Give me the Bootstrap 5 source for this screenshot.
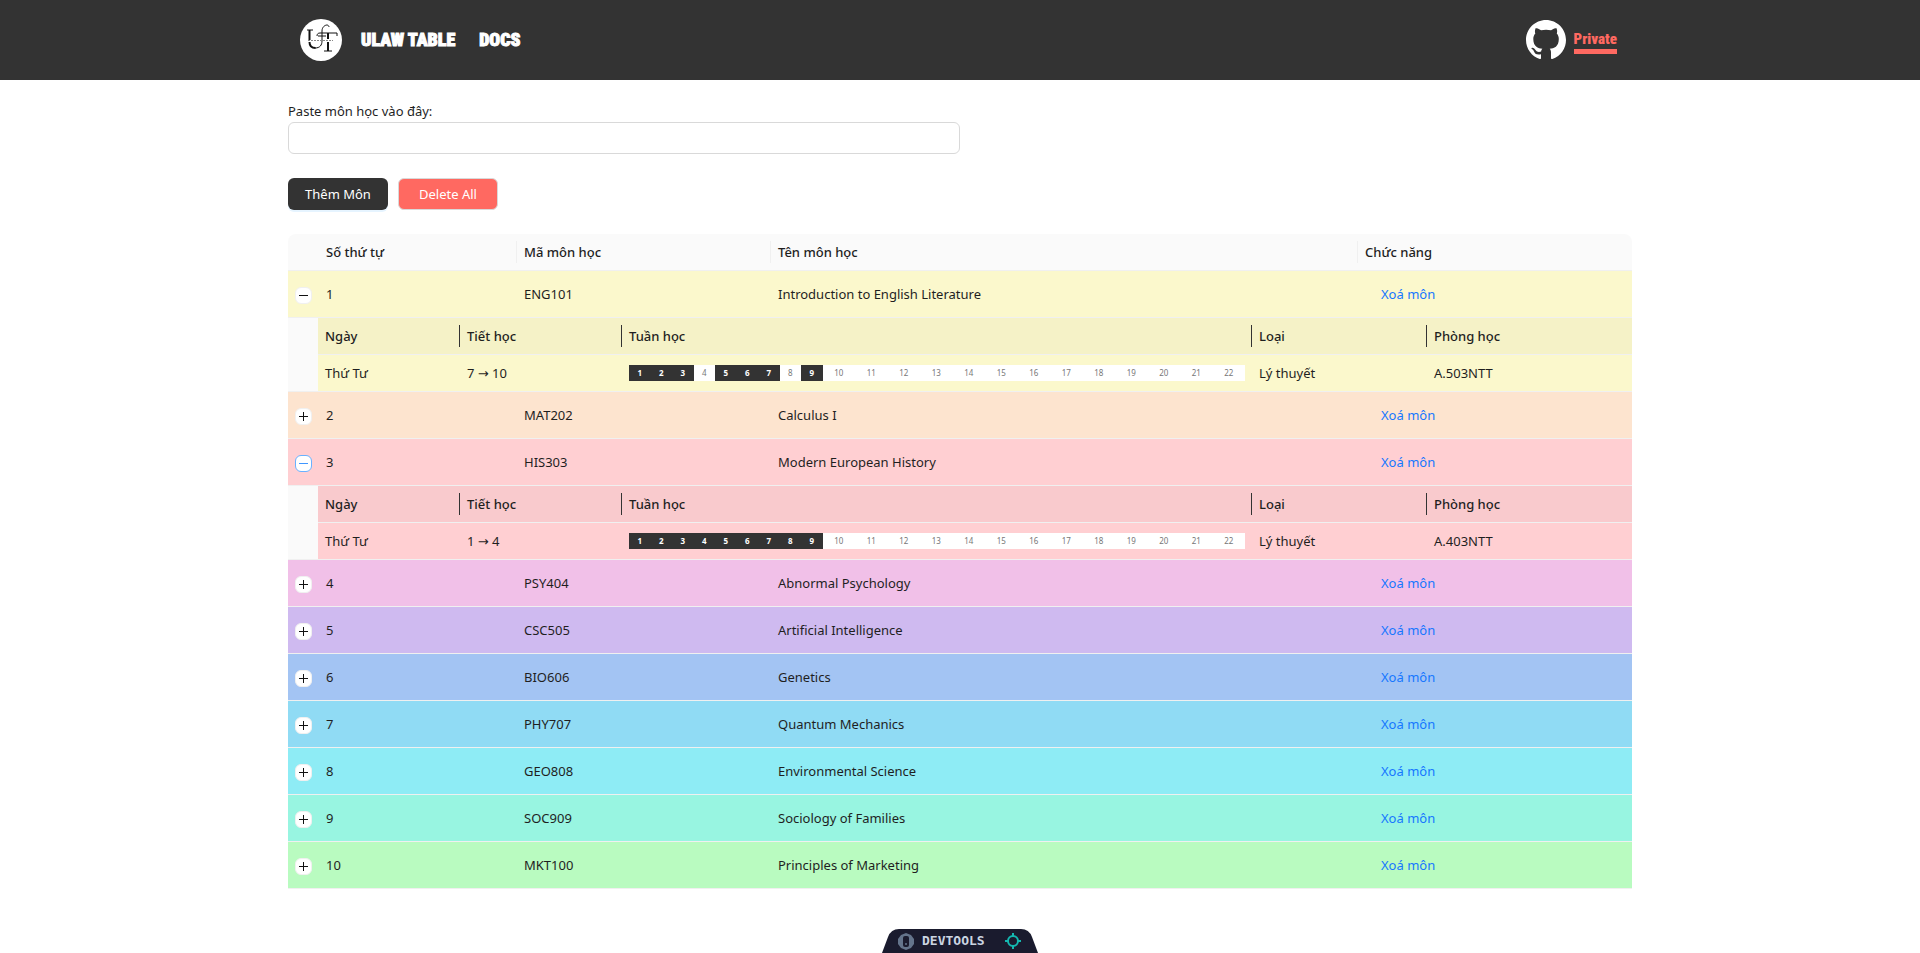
<!DOCTYPE html>
<html lang="vi">
<head>
<meta charset="utf-8">
<meta name="viewport" content="width=device-width, initial-scale=1">
<title>ULAW Table</title>
<link href="https://cdn.jsdelivr.net/npm/bootstrap@5.3.0/dist/css/bootstrap.min.css" rel="stylesheet">
<style>
  body { font: 13px/22px "Noto Sans", "Open Sans", sans-serif; color: #1f1f1f; background: #fff; }
  .page-width { width: 70%; }
  .topbar { background: #333; height: 80px; }
  .topbar nav { padding: 0 15px 0 12px; }
  .topbar a { font-family: Impact, "Roboto Condensed", "Liberation Sans Narrow", sans-serif; font-weight: 900; color: #fff; font-size: 18px; line-height: 24px; text-decoration: none; -webkit-text-stroke: 1px currentColor; }
  .topbar a.brand-mark { margin-right: 19px; }
  .topbar a.private-link { color: #ff6961; font-size: 15px; line-height: 20px; padding-top: 2px; border-bottom: 5px solid #ff6961; -webkit-text-stroke: 0; }
  .paste-box { width: 50%; height: 32px; border: 1px solid #d9d9d9; border-radius: 6px; }
  .actions { gap: 10px; }
  .act { width: 100px; height: 32px; border-radius: 6px; border: 0; color: #fff; padding: 0; }
  .act-add { background: #333; box-shadow: 0 2px 0 rgba(5,145,255,.1); }
  .act-del { background: #ff6961; border: 1px solid #d9d9d9; }
  table { table-layout: fixed; width: 100%; border-collapse: separate; border-spacing: 0; }
  th, td { padding: 0 7px; border-bottom: 1px solid #f0f0f0; }
  th { font-weight: 500; height: 37px; position: relative; }
  .courses > thead th { background: #fafafa; }
  .courses > thead th:first-child { border-top-left-radius: 8px; }
  .courses > thead th:last-child { border-top-right-radius: 8px; }
  .courses > thead th:nth-child(2), .courses > tbody > tr:not(.detail) > td:nth-child(2) { padding-left: 8px; }
  .courses > tbody > tr > td { height: 47px; background: var(--tone); }
  .courses > tbody > tr > td.toggle-cell { padding: 0; }
  .courses > tbody > tr.detail > td { height: 74px; padding: 0; border: 0; }
  .courses > tbody > tr.detail > td:first-child { background: #fafafa; border-bottom: 1px solid #f0f0f0; }
  .sessions th { background: rgba(0,0,0,.025); }
  .sessions td { height: 37px; }
  .arrow { font-family: "DejaVu Sans", sans-serif; }
  .split::after { content: ""; position: absolute; right: 0; top: 7px; width: 1px; height: 22px; background: #f0f0f0; }
  .sessions .split::after { background: #333; }
  .toggle { display: block; width: 17px; height: 17px; margin: 2px auto 0; padding: 0; border: 1px solid #f0f0f0; border-radius: 6px; background: #fff; color: #111; }
  .toggle svg { display: block; margin: 2px; }
  .toggle.focused { border-color: #69b1ff; color: #4096ff; }
  .remove { border: 0; background: none; color: #1677ff; padding: 0 16px; }
  .weeks { display: grid; grid-template-columns: repeat(9, 43fr) repeat(13, 65fr); background: #fff; color: #777; font-size: 8px; line-height: 16px; text-align: center; }
  .weeks b { background: #333; color: #fff; }
  .devtools { border: 0; background: none; padding: 0; width: 156px; height: 24px; }
</style>
</head>
<body class="min-vh-100 d-flex flex-column">
<header class="topbar">
  <nav class="page-width h-100 mx-auto d-flex align-items-center">
    <a class="brand-mark" href="#" aria-label="Home"><svg class="d-block" width="42" height="42" viewBox="0 0 42 42"><circle cx="21" cy="21" r="21" fill="#fff"/><g fill="none" stroke="#111"><path d="M7 11h6M24 32h8M17 17c0-2 1-3 3-3h17v3"/><path stroke-width="2" d="M9.500 11v10M9.500 23c0 5 3 6 6 6M28 14v6M28 23v9"/><path d="M15 29c5 0 7-3 7-7V12c0-4 3-6 5-6 1 0 2 1 2 2M18 17h8"/><path stroke="#888" stroke-dasharray="2 1" d="M8 21.500h25"/></g></svg></a>
    <a class="me-4" href="#">ULAW TABLE</a>
    <a href="#">DOCS</a>
    <a class="ms-auto me-2" href="#" aria-label="GitHub"><svg class="d-block" width="40" height="40" viewBox="0 0 16 16" fill="#fff" stroke="none"><path d="M8 0C3.580 0 0 3.580 0 8c0 3.540 2.290 6.530 5.470 7.590.4.070.55-.17.55-.38 0-.19-.01-.82-.01-1.490-2.010.37-2.530-.49-2.690-.94-.09-.23-.48-.94-.82-1.130-.28-.15-.68-.52-.01-.53.63-.01 1.080.58 1.230.82.72 1.210 1.870.87 2.330.66.07-.52.28-.87.51-1.070-1.780-.2-3.640-.89-3.640-3.950 0-.87.31-1.590.82-2.150-.08-.2-.36-1.020.08-2.120 0 0 .67-.21 2.200.82.64-.18 1.320-.27 2-.27s1.360.09 2 .27c1.530-1.040 2.200-.82 2.200-.82.44 1.100.16 1.920.08 2.120.51.56.82 1.270.82 2.150 0 3.070-1.870 3.750-3.650 3.950.29.25.54.73.54 1.480 0 1.070-.01 1.930-.01 2.200 0 .21.15.46.55.38A8.010 8.010 0 0 0 16 8c0-4.420-3.580-8-8-8"/></svg></a>
    <a class="private-link" href="#">Private</a>
  </nav>
</header>
<main class="page-width mx-auto pt-3">
  <div class="pt-1"><label class="d-block" for="paste">Paste môn học vào đây:</label>
  <input class="paste-box d-block px-2" id="paste" type="text"></div>
  <div class="actions d-flex my-4"><button class="act act-add" type="button">Thêm Môn</button><button class="act act-del" type="button">Delete All</button></div>
  <table class="courses">
    <colgroup><col style="width:30px"><col style="width:199px"><col style="width:254px"><col><col style="width:274px"></colgroup>
    <thead><tr><th aria-label="Expand"></th><th class="split">Số thứ tự</th><th class="split">Mã môn học</th><th class="split">Tên môn học</th><th>Chức năng</th></tr></thead>
    <tbody id="rows"></tbody>
  </table>
</main>
<footer class="mt-auto d-flex justify-content-center">
  <button class="devtools" type="button" aria-label="Devtools"><svg class="d-block" width="156" height="24" viewBox="0 0 156 24"><path fill="#1a1b2e" d="M0 24 6 8Q9 0 17 0H139Q147 0 150 8L156 24Z"/><path fill="#64748b" d="m24 4 5 2 3 4v5l-3 4-5 2-5-2-3-4v-5l3-4z"/><rect x="21" y="7" width="6" height="11" rx="2" fill="#1a1b2e"/><circle cx="24" cy="15" r="1" fill="#64748b"/><text x="40" y="16" fill="#cbd5e1" font-family="DejaVu Sans Mono" font-weight="700" font-size="13">DEVTOOLS</text><g fill="none" stroke="#14b8b0" stroke-width="2"><circle cx="131" cy="12" r="5"/><path d="M131 4v4M131 16v4M123 12h4M135 12h4"/></g></svg></button>
</footer>
<script src="https://cdn.jsdelivr.net/npm/bootstrap@5.3.0/dist/js/bootstrap.bundle.min.js"></script>
<script>
  const courses = [
    ['ENG101', 'Introduction to English Literature', '#fbf8cc', { time: [7, 10], room: 'A.503NTT', weeks: [1,2,3,5,6,7,9] }],
    ['MAT202', 'Calculus I', '#fde4cf'],
    ['HIS303', 'Modern European History', '#ffcfd2', { time: [1, 4], room: 'A.403NTT', weeks: [1,2,3,4,5,6,7,8,9], focused: true }],
    ['PSY404', 'Abnormal Psychology', '#f1c0e8'],
    ['CSC505', 'Artificial Intelligence', '#cfbaf0'],
    ['BIO606', 'Genetics', '#a3c4f3'],
    ['PHY707', 'Quantum Mechanics', '#90dbf4'],
    ['GEO808', 'Environmental Science', '#8eecf5'],
    ['SOC909', 'Sociology of Families', '#98f5e1'],
    ['MKT100', 'Principles of Marketing', '#b9fbc0']
  ];
  const weekCells = on => Array.from({ length: 22 }, (_, i) => on.includes(i + 1) ? `<b>${i + 1}</b>` : `<span>${i + 1}</span>`).join('');
  document.getElementById('rows').innerHTML = courses.map(([code, name, tone, d], i) => `
    <tr style="--tone:${tone}"><td class="toggle-cell"><button type="button" class="toggle ${d && d.focused ? 'focused' : ''}" aria-expanded="${!!d}" aria-label="${name}"><svg width="11" height="11" viewBox="0 0 11 11" stroke="currentColor"><path d="M1 5.500h9${d ? '' : 'M5.500 1v9'}"/></svg></button></td>
    <td>${i + 1}</td><td>${code}</td><td>${name}</td><td><button type="button" class="remove">Xoá môn</button></td></tr>` + (d ? `
    <tr class="detail" style="--tone:${tone}"><td></td><td colspan="4"><table class="sessions">
      <colgroup><col style="width:142px"><col style="width:162px"><col><col style="width:175px"><col style="width:205px"></colgroup>
      <thead><tr><th class="split">Ngày</th><th class="split">Tiết học</th><th class="split">Tuần học</th><th class="split">Loại</th><th>Phòng học</th></tr></thead>
      <tbody><tr><td>Thứ Tư</td><td>${d.time.join(' <span class="arrow">→</span> ')}</td><td><div class="weeks">${weekCells(d.weeks)}</div></td><td>Lý thuyết</td><td>${d.room}</td></tr></tbody>
    </table></td></tr>` : '')).join('');
</script>
</body>
</html>
